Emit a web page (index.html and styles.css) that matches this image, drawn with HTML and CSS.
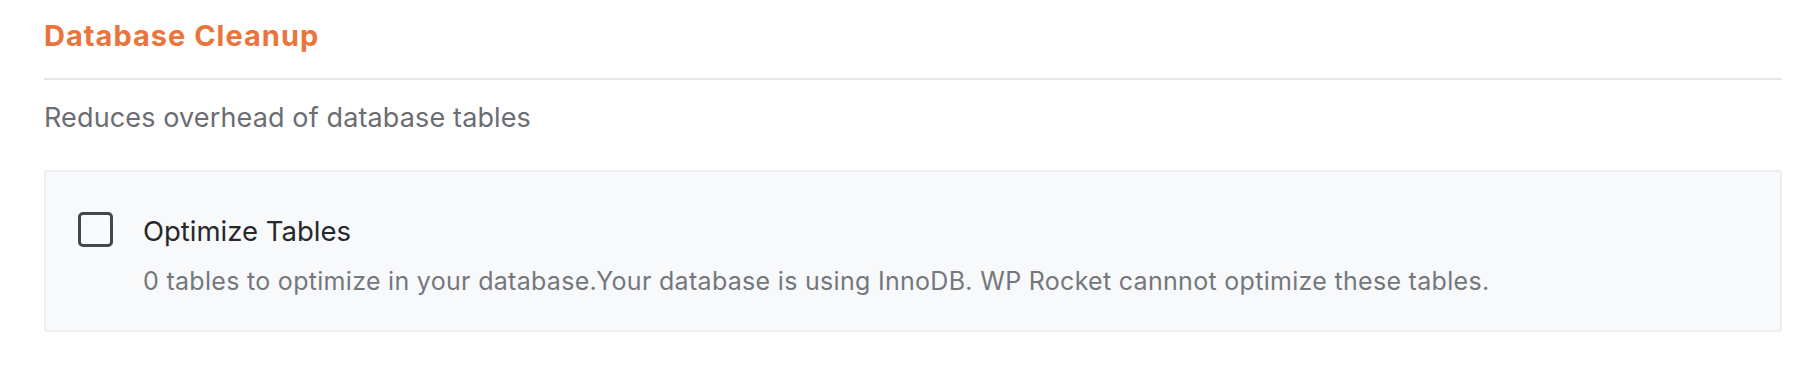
FILE: index.html
```html
<!DOCTYPE html>
<html>
<head>
  <title>Database Cleanup</title>
  <link rel="stylesheet" href="styles.css">
</head>
<body>
  <div class="section">
    <h2 class="section-title">Database Cleanup</h2>
    <p class="section-desc">Reduces overhead of database tables</p>

    <div class="field-box">
      <label class="field">
        <span class="checkbox"></span>
        <span class="field-text">
          <span class="field-label">Optimize Tables</span>
          <span class="field-help">0 tables to optimize in your database.Your database is using InnoDB. WP Rocket cannnot optimize these tables.</span>
        </span>
      </label>
    </div>
  </div>
</body>
</html>
```

FILE: styles.css
```css
body {
  margin: 0;
  padding: 0;
  background: #ffffff;
  font-family: Inter, "Noto Sans", sans-serif;
}

.section {
  padding: 18px 32px 0 44px;
}

.section-title {
  margin: 0;
  padding-bottom: 24px;
  font-size: 29px;
  line-height: 36px;
  font-weight: 700;
  letter-spacing: 1px;
  color: #ea753c;
  border-bottom: 2px solid #e4e7ec;
}

.section-desc {
  margin: 0;
  padding: 21px 0 35px;
  font-size: 27px;
  line-height: 34px;
  letter-spacing: 0.13px;
  color: #6b6d71;
}

/* Option card */
.field-box {
  background: #f8f9fb;
  border: 2px solid #eceef2;
  border-radius: 3px;
  height: 162px;
  padding: 40px 32px 0;
  box-sizing: border-box;
}

.field {
  display: flex;
  align-items: flex-start;
  gap: 30px;
}

.checkbox {
  width: 35px;
  height: 35px;
  box-sizing: border-box;
  border: 3px solid #45474b;
  border-radius: 5px;
  flex-shrink: 0;
}

.field-text {
  display: flex;
  flex-direction: column;
  gap: 17px;
  padding-top: 2px;
}

.field-label {
  font-size: 27.5px;
  line-height: 34px;
  color: #26282c;
}

.field-help {
  font-size: 25px;
  line-height: 32px;
  letter-spacing: 0.3px;
  color: #74777c;
}
```
